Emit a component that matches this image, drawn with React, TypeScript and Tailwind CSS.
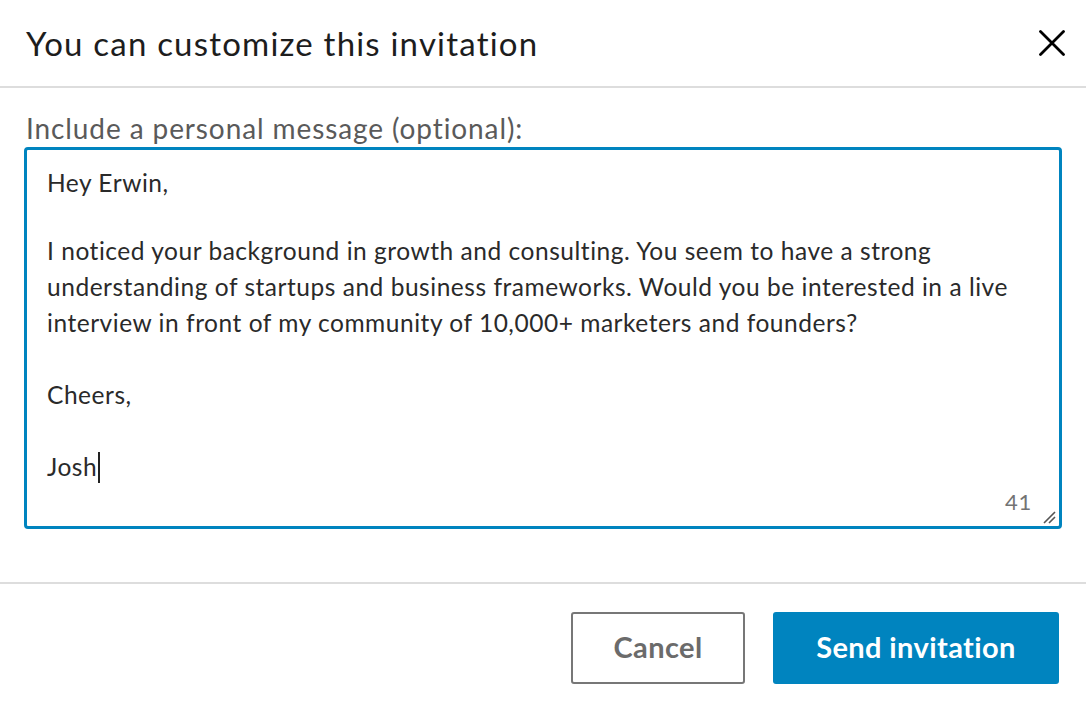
export default function App() {
  const font = { fontFamily: 'Lato, "Open Sans", sans-serif' }

  return (
    <main className="h-[710px] w-full bg-white text-[#222]" style={font}>
      {/* header */}
      <div className="flex h-[88px] items-center justify-between border-b-2 border-[#dddddd] pl-[26px] pr-[19px]">
        <h1 className="text-[33px] leading-none tracking-[1.2px] text-[#1d1d1d]">You can customize this invitation</h1>
        <button type="button" aria-label="Close" className="flex size-[30px] items-center justify-center">
          <svg width="26" height="26" viewBox="0 0 26 26" fill="none" stroke="#000" strokeWidth="2.8" strokeLinecap="round">
            <path d="M1.5 1.5l23 23M24.5 1.5l-23 23" />
          </svg>
        </button>
      </div>

      {/* body */}
      <div className="px-[24px] pt-[22px] pb-[53px]">
        <label className="block pl-[2px] text-[28px] leading-[36px] tracking-[0.9px] text-[#5a5a5a]">
          Include a personal message (optional):
        </label>
        <div className="relative mt-[1px] h-[382px] rounded-[4px] border-[3px] border-[#0084bf] pl-[20px] pt-[15px]">
          <div className="whitespace-nowrap text-[24.5px] leading-[36px] tracking-[0.53px] text-[#2a2a2a]">
            <p>Hey Erwin,</p>
            <p className="h-[32px]">&nbsp;</p>
            <p>I noticed your background in growth and consulting. You seem to have a strong</p>
            <p>understanding of startups and business frameworks. Would you be interested in a live</p>
            <p>interview in front of my community of 10,000+ marketers and founders?</p>
            <p>&nbsp;</p>
            <p>Cheers,</p>
            <p>&nbsp;</p>
            <p className="flex items-center">
              Josh<span className="ml-[1px] inline-block h-[31px] w-[2px] bg-[#222]" />
            </p>
          </div>
          <span className="absolute bottom-[13px] right-[27px] text-[22px] leading-none tracking-[0.8px] text-[#737373]">41</span>
          <svg className="absolute bottom-[2px] right-[3px]" width="14" height="14" viewBox="0 0 14 14" stroke="#555" strokeWidth="1.6">
            <path d="M2 13L13 2M7 13L13 7" />
          </svg>
        </div>
      </div>

      {/* footer */}
      <div className="flex justify-end gap-[28px] border-t-2 border-[#dddddd] pr-[27px] pt-[28px]">
        <button
          type="button"
          className="h-[72px] w-[174px] rounded-[3px] border-2 border-[#777] pb-[3px] text-[29px] font-bold tracking-[0.4px] text-[#6b6b6b]"
        >
          Cancel
        </button>
        <button
          type="button"
          className="h-[72px] w-[286px] rounded-[3px] bg-[#0084bf] pb-[3px] text-[29px] font-bold tracking-[0.4px] text-white"
        >
          Send invitation
        </button>
      </div>
    </main>
  )
}
